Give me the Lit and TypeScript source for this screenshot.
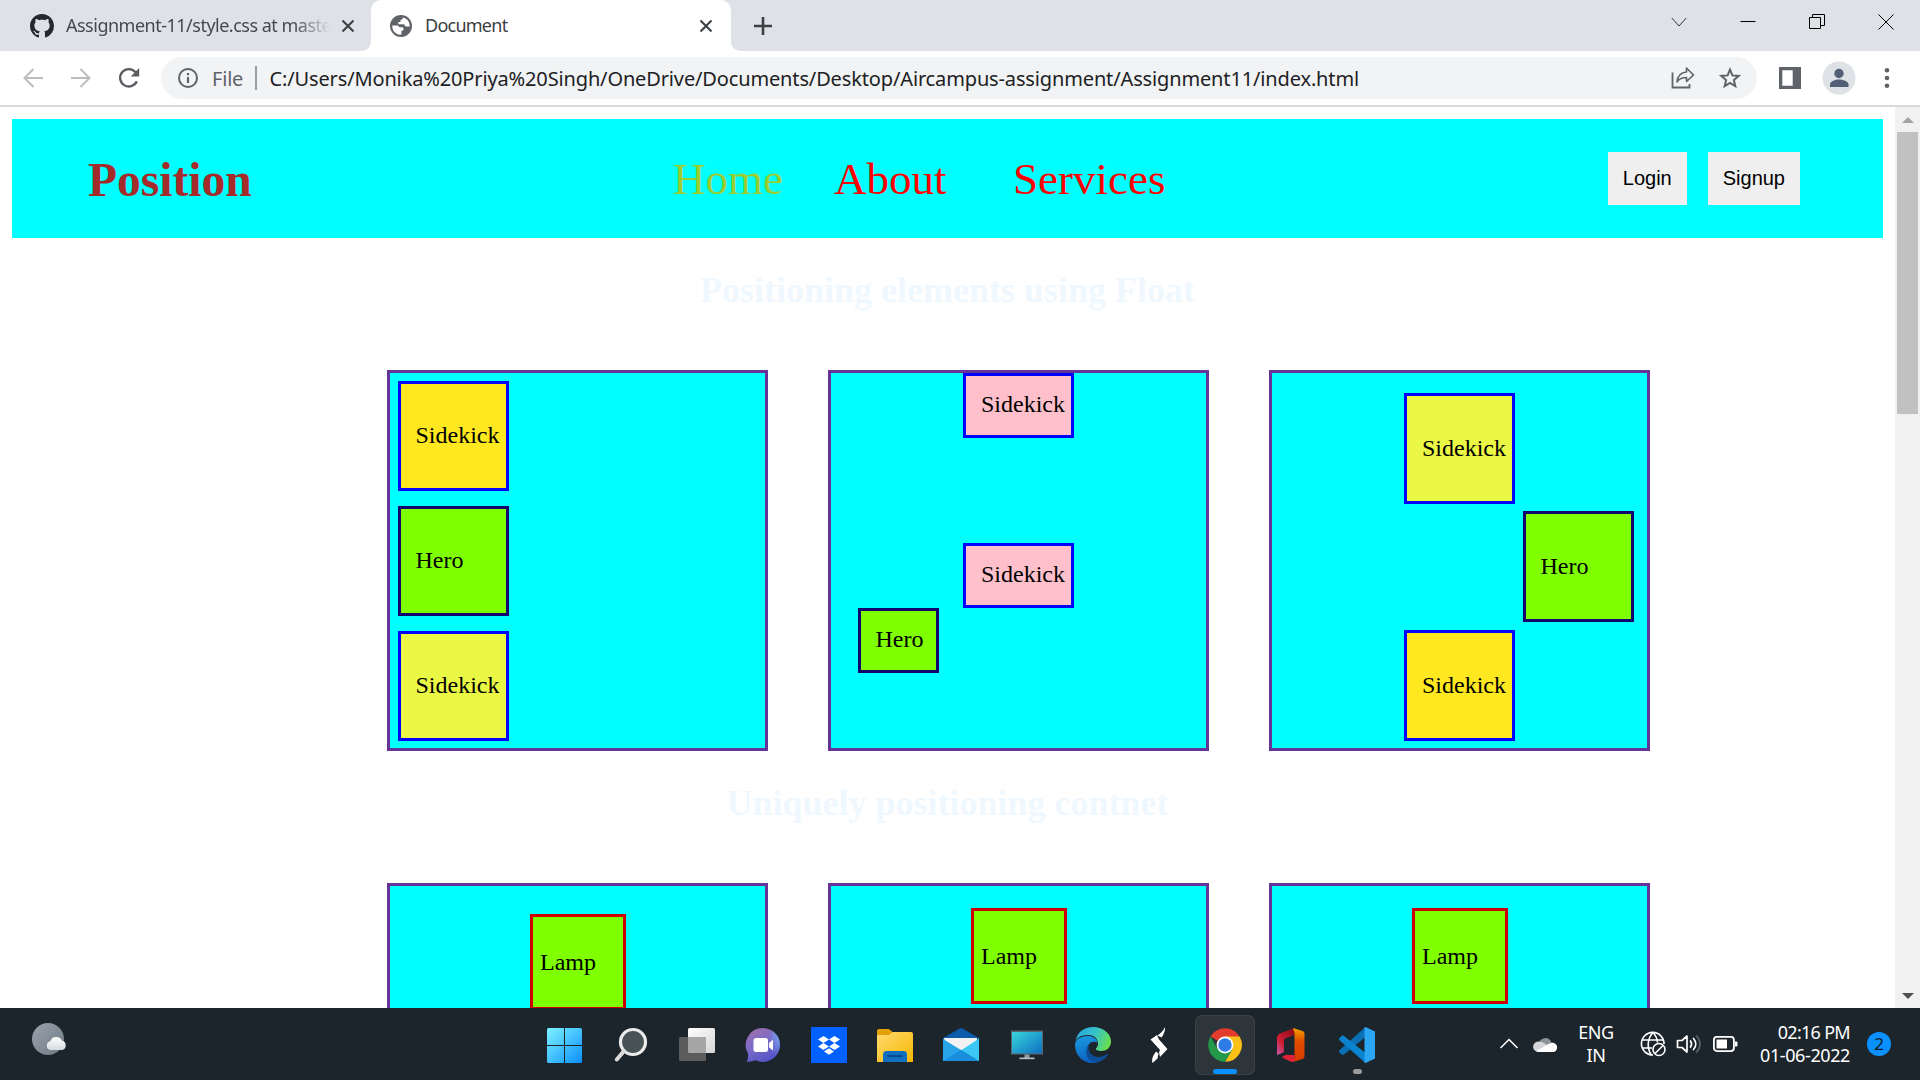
import { LitElement, html, css, svg } from "lit";
import { customElement } from "lit/decorators.js";

const icon = (size: number, box: string, body: unknown) => html`
  <svg width=${size} height=${size} viewBox=${box} fill="none">${body}</svg>`;

const github = icon(24, "0 0 16 16", svg`<path fill="#24292f" d="M8 0C3.58 0 0 3.58 0 8c0 3.54 2.29 6.53 5.47 7.59.4.07.55-.17.55-.38 0-.19-.01-.82-.01-1.49-2.01.37-2.53-.49-2.69-.94-.09-.23-.48-.94-.82-1.13-.28-.15-.68-.52-.01-.53.63-.01 1.08.58 1.23.82.72 1.21 1.87.87 2.33.66.07-.52.28-.87.51-1.07-1.78-.2-3.64-.89-3.64-3.95 0-.87.31-1.59.82-2.15-.08-.2-.36-1.02.08-2.12 0 0 .67-.21 2.2.82.64-.18 1.32-.27 2-.27s1.36.09 2 .27c1.53-1.04 2.2-.82 2.2-.82.44 1.1.16 1.92.08 2.12.51.56.82 1.27.82 2.15 0 3.07-1.87 3.75-3.65 3.95.29.25.54.73.54 1.48 0 1.07-.01 1.93-.01 2.2 0 .21.15.46.55.38A8.01 8.01 0 0 0 16 8c0-4.42-3.58-8-8-8z"/>`);

const globe = icon(22, "0 0 22 22", svg`
  <circle cx="11" cy="11" r="11" fill="#5f6368"/>
  <path fill="#fff" d="M2.300 10.500h5.200c1.200 0 1.200 1.700 2.300 1.700h2.400c1 0 1.400.8 1.400 1.700 0 1.300-1 1.800-2.200 1.800v3.900c-5.200.6-9.600-3.600-9.100-9.100z"/>
  <path fill="#fff" d="M12.800 2.500c0 1.600-.8 2.300-2.300 2.300v2.300H8.300v2.200h5.200c1.100 0 1.300 2.200 2.500 2.200h3.700c.3-4.600-2.700-8.200-6.900-9z"/>`);

const close = icon(14, "0 0 14 14", svg`<path stroke="#3c4043" stroke-width="2.100" d="M1.500 1.500l11 11M12.500 1.500l-11 11"/>`);
const plus = icon(18, "0 0 18 18", svg`<path stroke="#3c4043" stroke-width="2.600" d="M9 0v18M0 9h18"/>`);
const caret = icon(16, "0 0 16 16", svg`<path stroke="#333" d="M.8 4l7.200 8 7.200-8"/>`);
const minimise = icon(16, "0 0 16 16", svg`<path stroke="#000" d="M.5 7.500h15"/>`);
const restore = icon(16, "0 0 16 16", svg`<path stroke="#000" d="M.5 3.500h11v11h-11zM3.500 3.500v-3h12v11h-4"/>`);
const closeWin = icon(16, "0 0 16 16", svg`<path stroke="#000" d="M.5 .5l15 15M15.500 .5l-15 15"/>`);
const back = icon(20, "0 0 20 20", svg`<path stroke="#babcbe" stroke-width="2" d="M20 10H2M10.500 1L1.500 10l9 9"/>`);
const forward = icon(20, "0 0 20 20", svg`<path stroke="#babcbe" stroke-width="2" d="M0 10h18M9.500 1l9 9-9 9"/>`);
const reload = icon(22, "0 0 22 22", svg`
  <path stroke="#5a5d61" stroke-width="2.300" d="M18.800 14.300A8.700 8.700 0 1 1 17.500 5.200"/>
  <path fill="#5a5d61" d="M21.200 1v8.500h-8.500z"/>`);
const info = icon(20, "0 0 20 20", svg`
  <circle cx="10" cy="10" r="9" stroke="#5f6368" stroke-width="2"/>
  <path stroke="#5f6368" stroke-width="2.200" d="M10 9v6M10 5v2.200"/>`);
const share = icon(24, "0 0 24 24", svg`
  <path stroke="#5f6368" stroke-width="1.800" d="M1.500 6.500v15h17v-3.500"/>
  <path stroke="#5f6368" stroke-width="1.600" stroke-linejoin="round" d="M15.500 2l7 7-7 6.500v-4c-4.500 0-7.500 1.500-9.500 4.500.5-5.500 3.500-9.500 9.500-10z"/>`);
const star = icon(22, "0 0 22 22", svg`<path stroke="#5f6368" stroke-width="2" d="M11 2.600l2.400 5.800 6.200.5-4.700 4.100 1.400 6.100L11 15.900l-5.300 3.200 1.400-6.100-4.700-4.100 6.200-.5z"/>`);
const panel = icon(22, "0 0 22 22", svg`<path fill="#5f6368" fill-rule="evenodd" d="M0 0h22v22H0zM3.300 3.300v15.400h10.400V3.300z"/>`);
const avatar = icon(34, "0 0 34 34", svg`
  <circle cx="17" cy="17" r="16.500" fill="#dee1e6"/>
  <circle cx="17" cy="12.500" r="4.700" fill="#535f75"/>
  <path fill="#535f75" d="M8 26v-2.500c0-3.300 5.500-5 9-5s9.500 1.700 9.500 5V26z"/>`);
const dots = icon(22, "0 0 22 22", svg`<g fill="#5f6368"><circle cx="11" cy="3.300" r="2.300"/><circle cx="11" cy="11" r="2.300"/><circle cx="11" cy="18.700" r="2.300"/></g>`);
const arrowUp = icon(12, "0 0 12 12", svg`<path fill="#a3a3a3" d="M0 12l6-6 6 6z"/>`);
const arrowDown = icon(12, "0 0 12 12", svg`<path fill="#505050" d="M0 2l6 6 6-6z"/>`);

const weather = icon(36, "0 0 36 36", svg`
  <defs><linearGradient id="moon" x1="0" y1="0" x2="1" y2="1"><stop stop-color="#9aa4ae"/><stop offset="1" stop-color="#6f7983"/></linearGradient>
  <linearGradient id="wc" x1="0" y1="0" x2="0" y2="1"><stop stop-color="#fff"/><stop offset="1" stop-color="#d5dae0"/></linearGradient></defs>
  <circle cx="16" cy="16" r="16" fill="url(#moon)"/>
  <path fill="url(#wc)" d="M18.500 27a4.500 4.500 0 0 1-.2-8.800 6.300 6.300 0 0 1 11.700-.4A4.700 4.700 0 0 1 30 27z"/>`);

const apps = [
  icon(36, "0 0 36 36", svg`
    <defs><linearGradient id="win" x1="0" y1="0" x2="1" y2="1"><stop stop-color="#7df3ff"/><stop offset="1" stop-color="#0a8ffb"/></linearGradient>
    <clipPath id="winc"><path d="M0 1h17v17H0zM18 1h17v17H18zM0 19h17v17H0zM18 19h17v17H18z"/></clipPath></defs>
    <rect x="0" y="1" width="35" height="35" rx="1.500" fill="url(#win)" clip-path="url(#winc)"/>`),
  icon(36, "0 0 36 36", svg`
    <circle cx="20" cy="15" r="12.500" fill="#495256" stroke="#ececec" stroke-width="3.200"/>
    <path stroke="#dcdcdc" stroke-width="4" stroke-linecap="round" d="M11 24L3.800 32.500"/>`),
  icon(36, "0 0 36 36", svg`
    <defs><linearGradient id="tv" x1="0" y1="0" x2="1" y2="1"><stop stop-color="#fff"/><stop offset="1" stop-color="#d6d6d6"/></linearGradient></defs>
    <rect x="9" y="1" width="27" height="25" rx="1.500" fill="url(#tv)"/>
    <rect x="0" y="10" width="27" height="24" rx="1.500" fill="#5c5c5c"/>
    <path fill="#a6a6a6" d="M9 10h16.500a1.500 1.500 0 0 1 1.500 1.500V26H10.500A1.500 1.500 0 0 1 9 24.500z"/>`),
  icon(36, "0 0 36 36", svg`
    <defs><linearGradient id="teams" x1=".1" y1="0" x2=".6" y2="1"><stop stop-color="#a06fac"/><stop offset=".5" stop-color="#7b6bc8"/><stop offset="1" stop-color="#5354c8"/></linearGradient>
    <radialGradient id="tglow" cx=".95" cy=".25" r=".6"><stop stop-color="#71a2f0"/><stop offset="1" stop-color="#71a2f0" stop-opacity="0"/></radialGradient></defs>
    <path fill="url(#teams)" d="M18 1a17 17 0 1 1-7.500 32.300C7 34.500 4 35 1.500 35c1.400-2 1.800-4.500 1.500-8.500A17 17 0 0 1 18 1z"/>
    <path fill="url(#tglow)" d="M18 1a17 17 0 1 1 0 34z"/>
    <rect x="8.500" y="11" width="14.500" height="14" rx="2.500" fill="#fff"/>
    <path fill="#fff" d="M24 16l4-3.300v10.800L24 20.200z"/>`),
  icon(36, "0 0 36 36", svg`
    <path fill="#0061fe" d="M0 0h36v36H0z"/>
    <path fill="#fff" d="M12.500 9l5.500 3.500-5.500 3.500L7 12.500zM23.500 9l5.500 3.500-5.500 3.500-5.500-3.500zM12.500 16l5.500 3.500-5.500 3.500L7 19.500zM23.500 16l5.500 3.500-5.500 3.500-5.500-3.500zM18 21.300l5 3.200-5 3.300-5-3.300z"/>`),
  icon(36, "0 0 36 36", svg`
    <defs><linearGradient id="fold" x1="0" y1="0" x2="1" y2="1"><stop stop-color="#ffdc70"/><stop offset="1" stop-color="#f7b500"/></linearGradient></defs>
    <path fill="#e3a008" d="M0 4a2 2 0 0 1 2-2h10l4 3.500V12H0z"/>
    <path fill="url(#fold)" d="M0 8h12l4-3h18a2 2 0 0 1 2 2v28H0z"/>
    <path fill="#0f6fc0" d="M6 35v-7.500A3.500 3.500 0 0 1 9.500 24h17a3.500 3.500 0 0 1 3.500 3.500V35z"/>
    <path stroke="#0a4a8c" stroke-width="2" stroke-linecap="round" d="M11 29h14"/>`),
  icon(36, "0 0 36 36", svg`
    <path fill="#0d5cab" d="M0 11L17 1.300a2 2 0 0 1 2 0L36 11v12H0z"/>
    <path fill="#f2f2f2" d="M1 11h33v8L19 26 2 18z"/>
    <path fill="#3cc8f5" d="M36 11.500V34H2z"/>
    <path fill="#27a5e8" d="M0 12l36 22H0z"/>
    <path fill="#1a8fdd" d="M18 22.800L36 34H0z"/>`),
  icon(36, "0 0 36 36", svg`
    <defs><linearGradient id="mon" x1="0" y1="0" x2="1" y2="1"><stop stop-color="#38d6dc"/><stop offset="1" stop-color="#0e6fc0"/></linearGradient></defs>
    <rect x="2" y="3.500" width="32" height="24" fill="#5a666c"/>
    <rect x="3" y="5" width="30" height="21.500" fill="url(#mon)"/>
    <path fill="#8f9aa0" d="M15.500 27.500h5v3.500h-5z"/><path fill="#b4bdc2" d="M10.500 30.500h15v1.700h-15z"/>`),
  icon(36, "0 0 36 36", svg`
    <defs><linearGradient id="eg" x1="0" y1=".3" x2="1" y2=".6"><stop stop-color="#2aa8e0"/><stop offset=".5" stop-color="#35c3c8"/><stop offset="1" stop-color="#6be04a"/></linearGradient>
    <linearGradient id="eb" x1="0" y1="0" x2=".3" y2="1"><stop stop-color="#1b9de2"/><stop offset="1" stop-color="#0c62c0"/></linearGradient></defs>
    <path fill="url(#eg)" d="M.5 14C2 5.500 9 0 18 0c10.500 0 18 7 18 14.500C36 21 31 24 26.500 24c-4 0-6-1-5.500-2.500 1-1.300 2-2.500 2-5C23 11 18 7.500 12 8 6.500 8.300 2 10.500.5 14z"/>
    <path fill="url(#eb)" d="M12 9c5.500-.5 10 2.500 10.500 6.500C16 13 11.500 18 12.500 24c1 6.500 7 10.500 13 10.300A17.500 17.500 0 0 1 17.500 36C7.500 36 0 28 0 18c0-5.500 6-8.700 12-9z"/>
    <path fill="#0d4c96" d="M14.500 17c-3.500 7 3 13.500 10 13 3.500-.2 6-2 7.500-3 1-.5 1.500 0 1 .8C29 34 23 36.500 17.500 34.500c-7-2.500-8.500-12-3-17.500z"/>`),
  icon(36, "0 0 36 36", svg`
    <path fill="#fff" d="M24 0c.5 3-1 7-3.300 10.500L16.500 8.500C19 6.500 22 4.500 24 0zM16 8l2 4.500L26.500 22 19 30l-1-4.500 1-2.500L9.500 12.500zM17.500 26.500l-1 5L11.500 36c-1-3 0-7 3.500-11.500z"/>`),
  icon(36, "0 0 36 36", svg`
    <path fill="#e33b2e" d="M18 18L3.600 9.500A16.800 16.800 0 0 1 32.600 9.600z"/>
    <path fill="#fbc116" d="M18 9.600h14.600A16.800 16.800 0 0 1 18 34.800l7.300-12.600z"/>
    <path fill="#229a49" d="M10.700 22.200L3.500 9.600A16.800 16.800 0 0 0 18 34.800l7.300-12.600z"/>
    <circle cx="18" cy="18" r="8.400" fill="#fff"/><circle cx="18" cy="18" r="6.700" fill="#2f7be8"/>`),
  icon(36, "0 0 36 36", svg`
    <defs><linearGradient id="oa" x1="0" y1="1" x2="1" y2="0"><stop stop-color="#c05fb4"/><stop offset=".35" stop-color="#d01f35"/><stop offset="1" stop-color="#860a12"/></linearGradient>
    <linearGradient id="ob" x1="0" y1="0" x2="0" y2="1"><stop stop-color="#f7a000"/><stop offset=".4" stop-color="#e04c00"/><stop offset="1" stop-color="#d63a00"/></linearGradient></defs>
    <path fill="url(#oa)" d="M21.500 1L7 6.500C5 7.500 4 9 4 11v17l5.500-2c1-.5 1.500-1.200 1.500-2.500V12l10.500-4z"/>
    <path fill="url(#ob)" d="M20 1l9.500 3c1.500.6 2 1.500 2 3v22c0 1.500-.5 2.400-2 3L20 35l1.500-4V6z"/>
    <path fill="#e0233a" d="M9 30.500c1-.8 2-2.500 4-2.500h8.500v5.500c-1 1.800-2.500 1.800-4 1z"/>`),
  icon(36, "0 0 36 36", svg`
    <path fill="#0a6fb5" d="M26.500 0v10L5 27.500c-.8.700-1.600.6-2.300 0L.6 25.600c-.8-.7-.8-1.800 0-2.500z"/>
    <path fill="#0a84d0" d="M26.500 36V26L5 8.900c-.8-.7-1.600-.6-2.300 0L.6 10.700c-.8.800-.8 1.900 0 2.500z"/>
    <path fill="#2aa6f2" d="M26.500 0L36 4.500v27L26.500 36c-1 .2-1-.5-1-1V1c0-.6 0-1.200 1-1z"/>`),
];

const trayChevron = icon(20, "0 0 20 20", svg`<path stroke="#fff" stroke-width="1.500" d="M1.500 14L10 5.500l8.500 8.500"/>`);
const cloud = icon(26, "0 0 26 26", svg`
  <path fill="#8d9498" d="M7 12a6.500 6.500 0 0 1 12-1.500l3 5-9 3z"/>
  <path fill="#d4d6d7" d="M6.500 21a5.200 5.200 0 0 1-.4-10.400c3-.1 5.500 1.200 8 3l8 7.400z"/>
  <path fill="#fff" d="M4 20l10-5.500c4-2.500 6.500-3.300 8.500-2.200A4.600 4.600 0 0 1 21 21H6z"/>`);
const network = icon(26, "0 0 26 26", svg`
  <g stroke="#fff" stroke-width="1.600"><path d="M13 24A11.300 11.300 0 1 1 24 13"/><path d="M13 1.500c-6 6.500-6 15.500-2 22M13 1.500c2.800 3 4.300 6.500 4.500 10M2.500 9h21M2.500 17h9.500"/>
  <circle cx="19" cy="18.500" r="6"/><path d="M15 22.500l8-8"/></g>`);
const speaker = icon(26, "0 0 26 26", svg`
  <g stroke="#fff" stroke-width="1.700" stroke-linejoin="round" stroke-linecap="round"><path d="M1.500 9.500v7h4.500l5 4.500V5L6 9.500z"/><path d="M14.500 10c1.300 1.800 1.300 4.200 0 6M17.500 7.500c3 3.300 3 7.700 0 11"/><path stroke="#5c656a" d="M20.500 5c4.600 4.500 4.600 11.500 0 16"/></g>`);
const battery = icon(26, "0 0 26 26", svg`
  <rect x="1.900" y="5.900" width="20" height="14.200" rx="3" stroke="#fff" stroke-width="1.800"/>
  <rect x="4.500" y="8.500" width="10.500" height="9" fill="#fff"/><path fill="#fff" d="M23 10.500h1.500a1 1 0 0 1 1 1v3a1 1 0 0 1-1 1H23z"/>`);

@customElement("browser-chrome")
class BrowserChrome extends LitElement {
  static styles = css`
    :host { display: block; font-family: "Noto Sans", "Open Sans", sans-serif; }
    svg { display: block; flex: none; }
    .strip { display: flex; height: 51px; background: #dee1e6; }
    .tab { display: flex; align-items: center; box-sizing: border-box; font-size: 18px; letter-spacing: -0.75px; color: #3c4043; white-space: nowrap; }
    .name { padding-bottom: 2px; }
    .idle { width: 371px; padding-left: 30px; color: #45494d; letter-spacing: -0.5px; }
    .idle .name { margin-left: 12px; width: 264px; overflow: hidden; margin-right: 11px;
      -webkit-mask-image: linear-gradient(90deg, #000 86%, transparent); mask-image: linear-gradient(90deg, #000 86%, transparent); }
    .active { width: 360px; padding-left: 19px; background: #fff; border-radius: 10px 10px 0 0; position: relative; }
    .active::before, .active::after { content: ""; position: absolute; bottom: 0; width: 9px; height: 9px; }
    .active::before { left: -9px; background: radial-gradient(circle at 0 0, transparent 8.5px, #fff 9px); }
    .active::after { right: -9px; background: radial-gradient(circle at 100% 0, transparent 8.5px, #fff 9px); }
    .active .name { margin-left: 13px; flex: 1; }
    .active .x { margin-right: 18px; }
    .new { display: flex; align-items: center; margin-left: 23px; flex: 1; }
    .window { display: flex; gap: 53px; padding: 14px 26px 0 0; }
    .bar { display: flex; align-items: center; height: 54px; border-bottom: 2px solid #d9dadc; background: #fff; padding-left: 23px; }
    .bar > .reload { margin: 0 21px 0 27px; }
    .bar > .fwd { margin-left: 28px; }
    .omni { display: flex; align-items: center; box-sizing: border-box; width: 1596px; height: 42px; border-radius: 21px; background: #f1f3f4; padding-left: 17px; font-size: 20px; white-space: nowrap; }
    .scheme { color: #5f6368; margin-left: 14px; width: 43px; letter-spacing: -0.2px; }
    .rule { width: 1.5px; height: 24px; background: #9a9da1; }
    .url { margin-left: 13px; flex: 1; color: #202124; letter-spacing: -0.14px; }
    .share { margin-right: 24px; }
    .star { margin-right: 16px; }
    .panel { margin: 0 21px 0 22px; }
    .dots { margin-left: 20px; }
  `;
  render() {
    return html`
      <div class="strip">
        <div class="tab idle">${github}<span class="name">Assignment-11/style.css at master</span>${close}</div>
        <div class="tab active">${globe}<span class="name">Document</span><span class="x">${close}</span></div>
        <div class="new">${plus}</div>
        <div class="window">${caret}${minimise}${restore}${closeWin}</div>
      </div>
      <div class="bar">
        ${back}<span class="fwd">${forward}</span><span class="reload">${reload}</span>
        <div class="omni">
          ${info}<span class="scheme">File</span><span class="rule"></span>
          <span class="url">C:/Users/Monika%20Priya%20Singh/OneDrive/Documents/Desktop/Aircampus-assignment/Assignment11/index.html</span>
          <span class="share">${share}</span><span class="star">${star}</span>
        </div>
        <span class="panel">${panel}</span>${avatar}<span class="dots">${dots}</span>
      </div>`;
  }
}

@customElement("position-page")
class PositionPage extends LitElement {
  static styles = css`
    :host { display: flex; height: 901px; overflow: hidden; background: #fff; font: 24px/27px "Liberation Serif", serif; color: #000; }
    svg { display: block; }
    .page { width: 1871px; padding: 12px 12px 0; }
    nav { display: flex; align-items: center; height: 119px; background: #00ffff; }
    .brand { width: 585px; padding-left: 76px; font-size: 47.5px; line-height: 54px; font-weight: bold; color: #a52a2a; padding-top: 2px; }
    .links { display: flex; flex: 1; font-size: 45px; line-height: 52px; color: #f00; }
    .home { color: #9acd32; width: 161px; }
    .about { width: 179px; }
    .actions { display: flex; gap: 21px; margin-right: 83px; }
    .btn { border: 0; margin: 0; padding: 15px; background: #efefef; font: 20px/23px "Liberation Sans", sans-serif; color: #000; }
    h2 { margin: 0; height: 132px; box-sizing: border-box; padding-top: 32px; font-size: 36px; line-height: 41px; font-weight: bold; color: #f0f8ff; text-align: center; }
    .row { display: flex; gap: 60px; padding-left: 375px; }
    .card { box-sizing: border-box; width: 381px; height: 381px; border: 3px solid #663399; background: #00ffff; display: flow-root; }
    .box { box-sizing: border-box; width: 111px; height: 111px; border: 3px solid #0000ff; padding: 39px 0 0 15px; }
    .gold { background: #ffe81f; }
    .lemon { background: #ebf745; }
    .hero { background: #80ff00; border-color: #14056e; }
    .left { display: flex; flex-direction: column; gap: 15px; padding: 8px 8px 0; }
    .left .box { height: 110px; padding: 38px 0 0 14.5px; }
    .low .box { height: 65px; padding-top: 15px; margin-left: 132px; }
    .low .pink { background: #ffc0cb; }
    .low .pink + .pink { margin-top: 105px; }
    .low .hero { width: 81px; margin-left: 27px; padding-left: 14.5px; }
    .right .box { margin: 20px 0 0 132px; }
    .right .hero { margin: 7px 0 0 251px; padding-left: 14.5px; }
    .right .gold { margin-top: 8px; }
    .lamp { box-sizing: border-box; width: 96px; height: 96px; margin: 22px auto 0 140px; border: 3px solid #cf0000; background: #80ff00; padding: 32px 0 0 7px; }
    .first .lamp { margin-top: 28px; }
    .scroll { display: flex; flex-direction: column; align-items: center; width: 25px; background: #f1f1f1; padding: 4px 0 5px; box-sizing: border-box; }
    .thumb { width: 21px; height: 282px; background: #c1c1c1; margin: 9px 0 auto; }
  `;
  render() {
    return html`
      <div class="page">
        <nav>
          <div class="brand">Position</div>
          <div class="links"><span class="home">Home</span><span class="about">About</span><span>Services</span></div>
          <div class="actions"><button class="btn">Login</button><button class="btn">Signup</button></div>
        </nav>
        <h2>Positioning elements using Float</h2>
        <div class="row">
          <div class="card left">
            <div class="box gold">Sidekick</div><div class="box hero">Hero</div><div class="box lemon">Sidekick</div>
          </div>
          <div class="card low">
            <div class="box pink">Sidekick</div><div class="box pink">Sidekick</div><div class="box hero">Hero</div>
          </div>
          <div class="card right">
            <div class="box lemon">Sidekick</div><div class="box hero">Hero</div><div class="box gold">Sidekick</div>
          </div>
        </div>
        <h2>Uniquely positioning contnet</h2>
        <div class="row">
          <div class="card first"><div class="lamp">Lamp</div></div>
          <div class="card"><div class="lamp">Lamp</div></div>
          <div class="card"><div class="lamp">Lamp</div></div>
        </div>
      </div>
      <div class="scroll">${arrowUp}<div class="thumb"></div>${arrowDown}</div>`;
  }
}

@customElement("task-bar")
class TaskBar extends LitElement {
  static styles = css`
    :host { display: flex; height: 72px; background: #1c252b; color: #fff; font: 18px/23px "Noto Sans", "Open Sans", sans-serif; }
    svg { display: block; flex: none; }
    .widgets { width: 532px; box-sizing: border-box; padding: 15px 0 0 32px; }
    .apps { display: flex; }
    .app { width: 60px; height: 60px; margin: 7px 3px 0; box-sizing: border-box; border-radius: 7px; display: flex; flex-direction: column; align-items: center; padding-top: 12px; }
    .current { background: #2d353a; box-shadow: inset 0 0 0 1px #3a4246; }
    .mark { height: 5px; border-radius: 3px; margin-top: 6px; width: 9px; background: #9b9b9b; }
    .current .mark { width: 24px; background: #0a90ff; }
    .tray { display: flex; align-items: center; flex: 1; padding-left: 109px; white-space: nowrap; }
    .lang { width: 40px; text-align: center; margin: 0 24px 0 18px; letter-spacing: -0.4px; }
    .icons { display: flex; gap: 10px; }
    .clock { flex: 1; text-align: right; letter-spacing: -0.4px; }
    .time { letter-spacing: -0.7px; }
    .cloud { margin-left: 13px; }
    .badge { width: 24px; height: 24px; border-radius: 12px; background: #0a90ff; color: #101820; text-align: center; margin: 0 29px 0 17px; line-height: 24px; font-size: 17px; }
  `;
  render() {
    return html`
      <div class="widgets">${weather}</div>
      <div class="apps">
        ${apps.map((a, i) => html`<div class="app ${i === 10 ? "current" : ""}">${a}${i === 10 || i === 12 ? html`<span class="mark"></span>` : ""}</div>`)}
      </div>
      <div class="tray">
        ${trayChevron}<span class="cloud">${cloud}</span>
        <div class="lang">ENG<br />IN</div>
        <div class="icons">${network}${speaker}${battery}</div>
        <div class="clock"><span class="time">02:16 PM</span><br />01-06-2022</div>
        <div class="badge">2</div>
      </div>`;
  }
}

@customElement("app-root")
class AppRoot extends LitElement {
  static styles = css`
    :host { display: block; width: 1920px; height: 1080px; overflow: hidden; background: #fff; }
  `;
  render() {
    return html`<browser-chrome></browser-chrome><position-page></position-page><task-bar></task-bar>`;
  }
}
